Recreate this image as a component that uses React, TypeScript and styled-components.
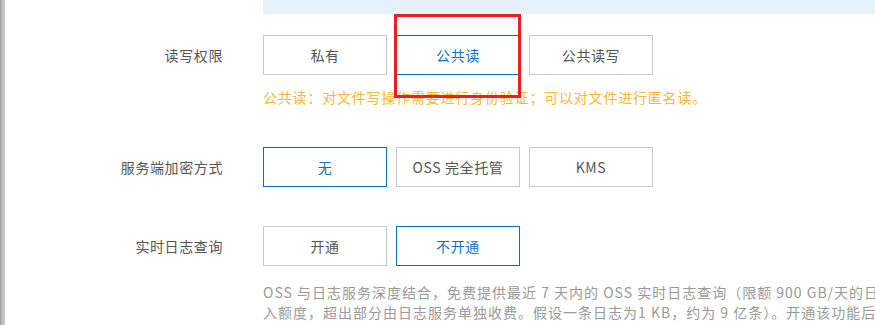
import React from "react";
import styled, { createGlobalStyle } from "styled-components";

const GlobalStyle = createGlobalStyle`
  html, body {
    margin: 0;
    padding: 0;
    background: #ffffff;
    overflow: hidden;
  }
  body {
    font-family: "Noto Sans CJK SC", "Noto Sans", "Liberation Sans", sans-serif;
    font-size: 14px;
    color: #333;
  }
`;

const Page = styled.div`
  position: relative;
  display: flex;
  width: 875px;
  height: 325px;
  overflow: hidden;
`;

const SideStrip = styled.div`
  flex: 0 0 5px;
  background: linear-gradient(to right, #9a9a9a, #bdbdbd 40%, #c9c9c9);
`;

const Content = styled.div`
  flex: 1;
  display: flex;
  flex-direction: column;
  min-width: 0;

  & > * {
    flex-shrink: 0;
  }
`;

const Banner = styled.div`
  height: 14px;
  margin-left: 258px;
  background: #e5f2fc;
`;

const FormItem = styled.div<{ $top: number }>`
  display: grid;
  grid-template-columns: 218px 1fr;
  column-gap: 40px;
  margin-top: ${(p) => p.$top}px;
`;

const Label = styled.div`
  height: 40px;
  display: flex;
  align-items: center;
  justify-content: flex-end;
  font-size: 14px;
  color: #555;
  letter-spacing: 0.6px;
  white-space: nowrap;
`;

const Control = styled.div`
  display: flex;
  flex-direction: column;
  min-width: 0;
`;

const ButtonGroup = styled.div`
  display: flex;
  gap: 9px;
`;

const Choice = styled.button<{ $active?: boolean }>`
  box-sizing: border-box;
  width: 124px;
  height: 40px;
  padding: 0;
  margin: 0;
  background: #fff;
  border: 1px solid ${(p) => (p.$active ? "#0a6fc2" : "#c9c9c9")};
  color: ${(p) => (p.$active ? "#0a72c9" : "#555")};
  font-family: "Noto Sans CJK SC", "Noto Sans", sans-serif;
  font-size: 14px;
  letter-spacing: 0.6px;
  line-height: 38px;
  text-align: center;
  cursor: pointer;
`;

const Hint = styled.div`
  margin-top: 12px;
  font-size: 14px;
  line-height: 20px;
  letter-spacing: 0.8px;
  color: #f6b63a;
  white-space: nowrap;
`;

const Description = styled.div`
  margin-top: 16px;
  width: 652px;
  font-size: 14px;
  line-height: 20px;
  letter-spacing: 1px;
  color: #999;
`;

const Annotation = styled.div`
  position: absolute;
  left: 394px;
  top: 14px;
  width: 127px;
  height: 84px;
  box-sizing: border-box;
  border: 3px solid #ee1d24;
  pointer-events: none;
`;

type Row = {
  label: string;
  options: string[];
  active: number;
  top: number;
};

const rows: Row[] = [
  { label: "读写权限", options: ["私有", "公共读", "公共读写"], active: 1, top: 21 },
  { label: "服务端加密方式", options: ["无", "OSS 完全托管", "KMS"], active: 0, top: 40 },
  { label: "实时日志查询", options: ["开通", "不开通"], active: 1, top: 39 },
];

export default function App() {
  return (
    <>
      <GlobalStyle />
      <Page>
        <SideStrip />
        <Content>
          <Banner />
          {rows.map((row, i) => (
            <FormItem key={row.label} $top={row.top}>
              <Label>{row.label}</Label>
              <Control>
                <ButtonGroup>
                  {row.options.map((opt, j) => (
                    <Choice key={opt} $active={j === row.active}>
                      {opt}
                    </Choice>
                  ))}
                </ButtonGroup>
                {i === 0 && (
                  <Hint>公共读：对文件写操作需要进行身份验证；可以对文件进行匿名读。</Hint>
                )}
                {i === 2 && (
                  <Description>
                    OSS 与日志服务深度结合，免费提供最近 7 天内的 OSS 实时日志查询（限额 900 GB/天的日志写入额度，超出部分由日志服务单独收费。假设一条日志为1 KB，约为 9 亿条）。开通该功能后，将会在日志服务中自动创建日志项目和日志库。
                  </Description>
                )}
              </Control>
            </FormItem>
          ))}
        </Content>
        <Annotation />
      </Page>
    </>
  );
}
